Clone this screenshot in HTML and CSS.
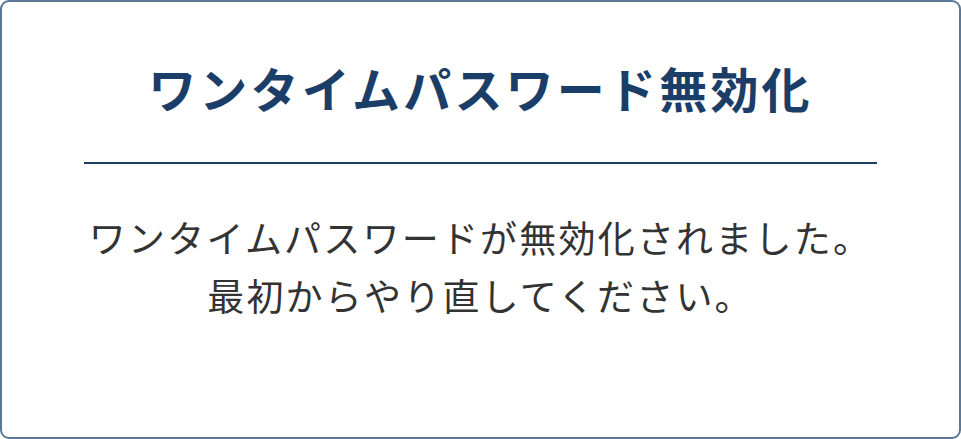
FILE: index.html
```html
<!DOCTYPE html>
<html lang="ja">
<head>
    <meta charset="UTF-8">
    <meta name="viewport" content="width=device-width, initial-scale=1.0">
    <title>ワンタイムパスワード無効化</title>
    <link rel="stylesheet" href="styles.css">
</head>
<body>
    <div class="panel">
        <h2 class="panel-title">ワンタイムパスワード無効化</h2>
        <div class="panel-body">
            <p>ワンタイムパスワードが無効化されました。<br>最初からやり直してください。</p>
        </div>
    </div>
</body>
</html>
```

FILE: styles.css
```css
html, body {
    margin: 0;
    padding: 0;
    background: #fff;
}
body {
    font-family: "Noto Sans CJK JP", "Noto Sans", sans-serif;
}
.panel {
    box-sizing: border-box;
    width: 961px;
    height: 439px;
    border: 2px solid #5b7896;
    border-radius: 9px;
    background: #fff;
    padding: 0 82px;
}
.panel-title {
    margin: 0;
    padding: 54px 0 44px;
    font-size: 48px;
    line-height: 62px;
    font-weight: bold;
    letter-spacing: 3.2px;
    color: #1b3e68;
    text-align: center;
    border-bottom: 2px solid #1b3e68;
}
.panel-body p {
    margin: 0;
    padding-top: 44px;
    font-size: 37px;
    line-height: 58px;
    letter-spacing: 2.2px;
    color: #333;
    text-align: center;
}
```
